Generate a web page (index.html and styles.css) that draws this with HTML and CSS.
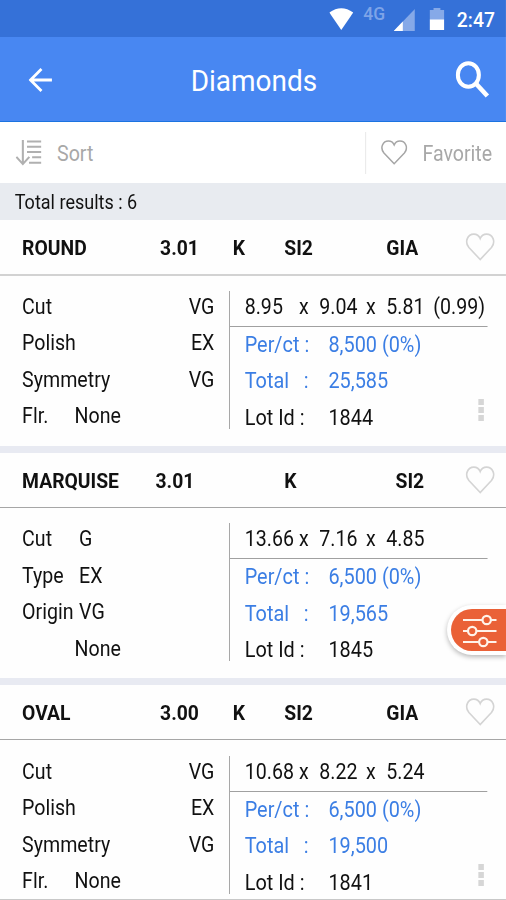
FILE: index.html
```html
<!DOCTYPE html>
<html lang="en">
<head>
    <meta charset="UTF-8">
    <meta name="viewport" content="width=device-width, initial-scale=1.0">
    <title>Diamonds</title>
    <link rel="stylesheet" href="styles.css">
</head>
<body>
    <div class="screen">
        <!-- Status bar -->
        <div class="status-bar">
            <svg class="wifi" viewBox="0 0 24 22" preserveAspectRatio="none"><path d="M0 4.500Q12-4 24 4.500L12 22z" fill="#fff"/></svg>
            <span class="network">4G</span>
            <svg class="signal" viewBox="0 0 21 22" preserveAspectRatio="none"><path d="M21 0v22H0z" fill="#86a9e8"/><path d="M9 12.500V22H0z" fill="#fff"/></svg>
            <svg class="battery" viewBox="0 0 15 22" preserveAspectRatio="none"><path d="M4 0h7v2h4v10H0V2h4z" fill="#86a9e8"/><path d="M0 11.500h15V22H0z" fill="#fff"/></svg>
            <span class="clock">2:47</span>
        </div>

        <header class="header">
            <svg class="back" viewBox="0 0 24 24" preserveAspectRatio="none"><path d="M23.500 12H2M13 1L2 12l11 11" fill="none" stroke="#fff" stroke-width="2.800"/></svg>
            <h1>Diamonds</h1>
            <svg class="search" viewBox="0 0 34 37" preserveAspectRatio="none"><ellipse cx="13" cy="14" rx="10.500" ry="11.800" fill="none" stroke="#fff" stroke-width="4"/><path d="M20.500 22.500L32 35" stroke="#fff" stroke-width="4.600"/></svg>
        </header>

        <div class="toolbar">
            <div class="sort">
                <svg viewBox="0 0 25 27" preserveAspectRatio="none"><path d="M7 0v25M0.700 17.500L7 25l6.300-7.500M11 1.500h14M11 7h14M11 12.500h14M16 18h9M13 23.700h12" fill="none" stroke="#b0b0b0" stroke-width="2"/></svg>
                <span>Sort</span>
            </div>
            <div class="favorite">
                <svg viewBox="0 0 30 28" preserveAspectRatio="none"><path d="M15 26.500L3.500 14.500C-1.500 8.500 2.500 1.200 8.500 1.200c3.500 0 5.500 2 6.500 4.300 1-2.300 3-4.300 6.500-4.300 6 0 10 7.300 5 13.300z" fill="none" stroke="#a6a6a6" stroke-width="1.700"/></svg>
                <span>Favorite</span>
            </div>
        </div>

        <div class="results">Total results : 6</div>

        <div class="card">
            <div class="card-header light">
                <span>ROUND</span><span>3.01</span><span>K</span><span>SI2</span><span>GIA</span>
                <svg class="heart" viewBox="0 0 30 28" preserveAspectRatio="none"><path d="M15 26.500L3.500 14.500C-1.500 8.500 2.500 1.200 8.500 1.200c3.500 0 5.500 2 6.500 4.300 1-2.300 3-4.300 6.500-4.300 6 0 10 7.300 5 13.300z"/></svg>
            </div>
            <div class="card-body">
                <div class="grades">
                    <p><span>Cut</span><span class="right">VG</span></p>
                    <p><span>Polish</span><span class="right">EX</span></p>
                    <p><span>Symmetry</span><span class="right">VG</span></p>
                    <p><span class="flr">Flr.</span><span>None</span></p>
                </div>
                <div class="details">
                    <div class="size"><span>8.95</span><span>x</span><span>9.04</span><span>x</span><span>5.81</span><span>(0.99)</span></div>
                    <p class="price"><span>Per/ct :</span><span>8,500 (0%)</span></p>
                    <p class="price"><span>Total   :</span><span>25,585</span></p>
                    <p><span>Lot Id :</span><span>1844</span><span class="more"><i></i><i></i><i></i></span></p>
                </div>
            </div>
        </div>

        <div class="card">
            <div class="card-header fancy">
                <span>MARQUISE</span><span>3.01</span><span>K</span><span>SI2</span>
                <svg class="heart" viewBox="0 0 30 28" preserveAspectRatio="none"><path d="M15 26.500L3.500 14.500C-1.500 8.500 2.500 1.200 8.500 1.200c3.500 0 5.500 2 6.500 4.300 1-2.300 3-4.300 6.500-4.300 6 0 10 7.300 5 13.300z"/></svg>
            </div>
            <div class="card-body">
                <div class="grades">
                    <p><span class="label">Cut</span><span>G</span></p>
                    <p><span class="label">Type</span><span>EX</span></p>
                    <p><span class="label">Origin</span><span>VG</span></p>
                    <p><span class="flr"></span><span>None</span></p>
                </div>
                <div class="details">
                    <div class="size"><span>13.66</span><span>x</span><span>7.16</span><span>x</span><span>4.85</span></div>
                    <p class="price"><span>Per/ct :</span><span>6,500 (0%)</span></p>
                    <p class="price"><span>Total   :</span><span>19,565</span></p>
                    <p><span>Lot Id :</span><span>1845</span></p>
                </div>
            </div>
        </div>

        <div class="card last">
            <div class="card-header">
                <span>OVAL</span><span>3.00</span><span>K</span><span>SI2</span><span>GIA</span>
                <svg class="heart" viewBox="0 0 30 28" preserveAspectRatio="none"><path d="M15 26.500L3.500 14.500C-1.500 8.500 2.500 1.200 8.500 1.200c3.500 0 5.500 2 6.500 4.300 1-2.300 3-4.300 6.500-4.300 6 0 10 7.300 5 13.300z"/></svg>
            </div>
            <div class="card-body">
                <div class="grades">
                    <p><span>Cut</span><span class="right">VG</span></p>
                    <p><span>Polish</span><span class="right">EX</span></p>
                    <p><span>Symmetry</span><span class="right">VG</span></p>
                    <p><span class="flr">Flr.</span><span>None</span></p>
                </div>
                <div class="details">
                    <div class="size"><span>10.68</span><span>x</span><span>8.22</span><span>x</span><span>5.24</span></div>
                    <p class="price"><span>Per/ct :</span><span>6,500 (0%)</span></p>
                    <p class="price"><span>Total   :</span><span>19,500</span></p>
                    <p><span>Lot Id :</span><span>1841</span><span class="more"><i></i><i></i><i></i></span></p>
                </div>
            </div>
        </div>
    </div>

    <!-- Floating filter button -->
    <div class="filter-btn">
        <svg viewBox="0 0 34 34" fill="none" stroke="#fff3ea" stroke-width="2.200"><path d="M0 6h19.500M28 6h5.500M0 17h5M13.500 17h20M0 28h16M24.500 28h9"/><circle cx="23.700" cy="6" r="4.200"/><circle cx="9.200" cy="17" r="4.200"/><circle cx="20.300" cy="28" r="4.200"/></svg>
    </div>
</body>
</html>
```
FILE: styles.css
```css
body {
    font-family: Roboto, Arial, sans-serif;
    background-color: #fefefe;
    color: #111;
    margin: 0;
    height: 900px;
    position: relative;
}

/* Slightly condensed screen, 550px squeezed to the 506px page */
.screen {
    width: 550px;
    height: 900px;
    margin-right: -44px;
    overflow: hidden;
    font-size: 21.3px;
    transform: scaleX(0.9199);
    transform-origin: 0 0;
}

p {
    margin: 0;
}

svg {
    display: block;
    flex: none;
}

.status-bar {
    background-color: #3571d8;
    height: 37px;
    display: flex;
    align-items: center;
    justify-content: flex-end;
    padding-right: 12px;
    box-sizing: border-box;
    color: white;
}

.wifi {
    width: 26px;
    height: 22px;
}

.network {
    color: #7ea4e8;
    font-size: 19px;
    font-weight: 500;
    line-height: 20px;
    margin: 0 9px 9px 11px;
}

.signal {
    width: 23px;
    height: 22px;
    margin-top: 3px;
}

.battery {
    width: 16px;
    height: 22px;
    margin: 1px 14px 0 16px;
}

.clock {
    font-size: 21px;
    font-weight: 500;
    margin-top: 2px;
}

.header {
    background-color: #4887f2;
    border-bottom: 1px solid #1c73e0;
    height: 85px;
    box-sizing: border-box;
    display: flex;
    align-items: center;
    justify-content: space-between;
    padding: 0 18px 0 31px;
    color: white;
}

.header h1 {
    font-size: 30.4px;
    font-weight: 400;
    margin: 3px 0 0;
}

.back {
    width: 26px;
    height: 24px;
    margin-top: 2px;
}

.search {
    width: 37px;
    height: 37px;
}

.toolbar {
    background: white;
    height: 61px;
    display: flex;
    align-items: center;
    justify-content: space-between;
    color: #a8a8a8;
}

.sort,
.favorite {
    display: flex;
    align-items: center;
}

.sort {
    padding-left: 17px;
}

.sort svg {
    width: 28px;
    height: 26px;
    margin-right: 17px;
}

.favorite {
    border-left: 1px solid #e6e6e6;
    height: 42px;
    padding: 0 15px 0 16px;
}

.favorite svg {
    width: 29px;
    height: 25px;
    margin-right: 16px;
}

.toolbar span {
    margin-top: 1px;
}

.results {
    background-color: #e8ebf0;
    height: 37px;
    line-height: 40px;
    font-size: 19.6px;
    padding-left: 16px;
}

.card {
    height: 225.5px;
    border-bottom: 7px solid #e8eaf2;
}

.card.last {
    height: 213.5px;
    border-bottom: 1px solid #c8c8c8;
}

.card-header {
    display: grid;
    grid-template-columns: 150px 79px 56px 111px 1fr 32px;
    align-items: center;
    height: 55px;
    box-sizing: border-box;
    padding: 2px 12px 0 24px;
    border-bottom: 1px solid #a6a6a6;
    font-size: 21px;
    font-weight: 700;
}

.card-header.light {
    height: 56px;
    border-bottom: 2px solid #d2d2d2;
}

.card-header.fancy {
    grid-template-columns: 145px 140px 121px 1fr 32px;
}

.heart {
    width: 32px;
    height: 28px;
    margin-top: -2px;
    fill: none;
    stroke: #d4d4d4;
    stroke-width: 1.7;
}

.card-body {
    display: flex;
    padding: 15.5px 20px 0 24px;
    line-height: 36.5px;
}

.light + .card-body {
    padding-top: 14.5px;
}

.grades {
    width: 209px;
    margin-top: -2px;
}

.grades p {
    display: flex;
    height: 36.5px;
}

.right {
    margin-left: auto;
}

.flr {
    width: 57px;
}

.label {
    width: 62px;
}

.details {
    flex: 1;
    height: 138px;
    margin-left: 16px;
    border-left: 1px solid #a0a0a0;
}

.size {
    display: grid;
    grid-template-columns: 59px 22px 51px 22px 51px 1fr;
    height: 35px;
    line-height: 31px;
    padding-left: 16px;
    border-bottom: 1px solid #a0a0a0;
    white-space: nowrap;
}

.details p {
    display: grid;
    grid-template-columns: 91px 1fr auto;
    height: 36.5px;
    padding-left: 16px;
    font-size: 21.6px;
    white-space: pre;
}

.details .price {
    color: #3b7ee4;
}

.more {
    display: flex;
    flex-direction: column;
    gap: 3px;
    padding-right: 4px;
}

.more i {
    width: 6px;
    height: 5.5px;
    margin-top: -0.5px;
    background-color: #d6d6d6;
}

.filter-btn {
    position: absolute;
    right: 0;
    top: 605px;
    width: 59px;
    height: 50px;
    box-sizing: border-box;
    border: 4px solid white;
    border-right: none;
    border-radius: 26px 0 0 26px;
    background-color: #ea6137;
    box-shadow: 0 2px 5px rgba(0, 0, 0, 0.28);
}

.filter-btn svg {
    width: 34px;
    height: 34px;
    margin: 5px 0 0 12px;
}
```
